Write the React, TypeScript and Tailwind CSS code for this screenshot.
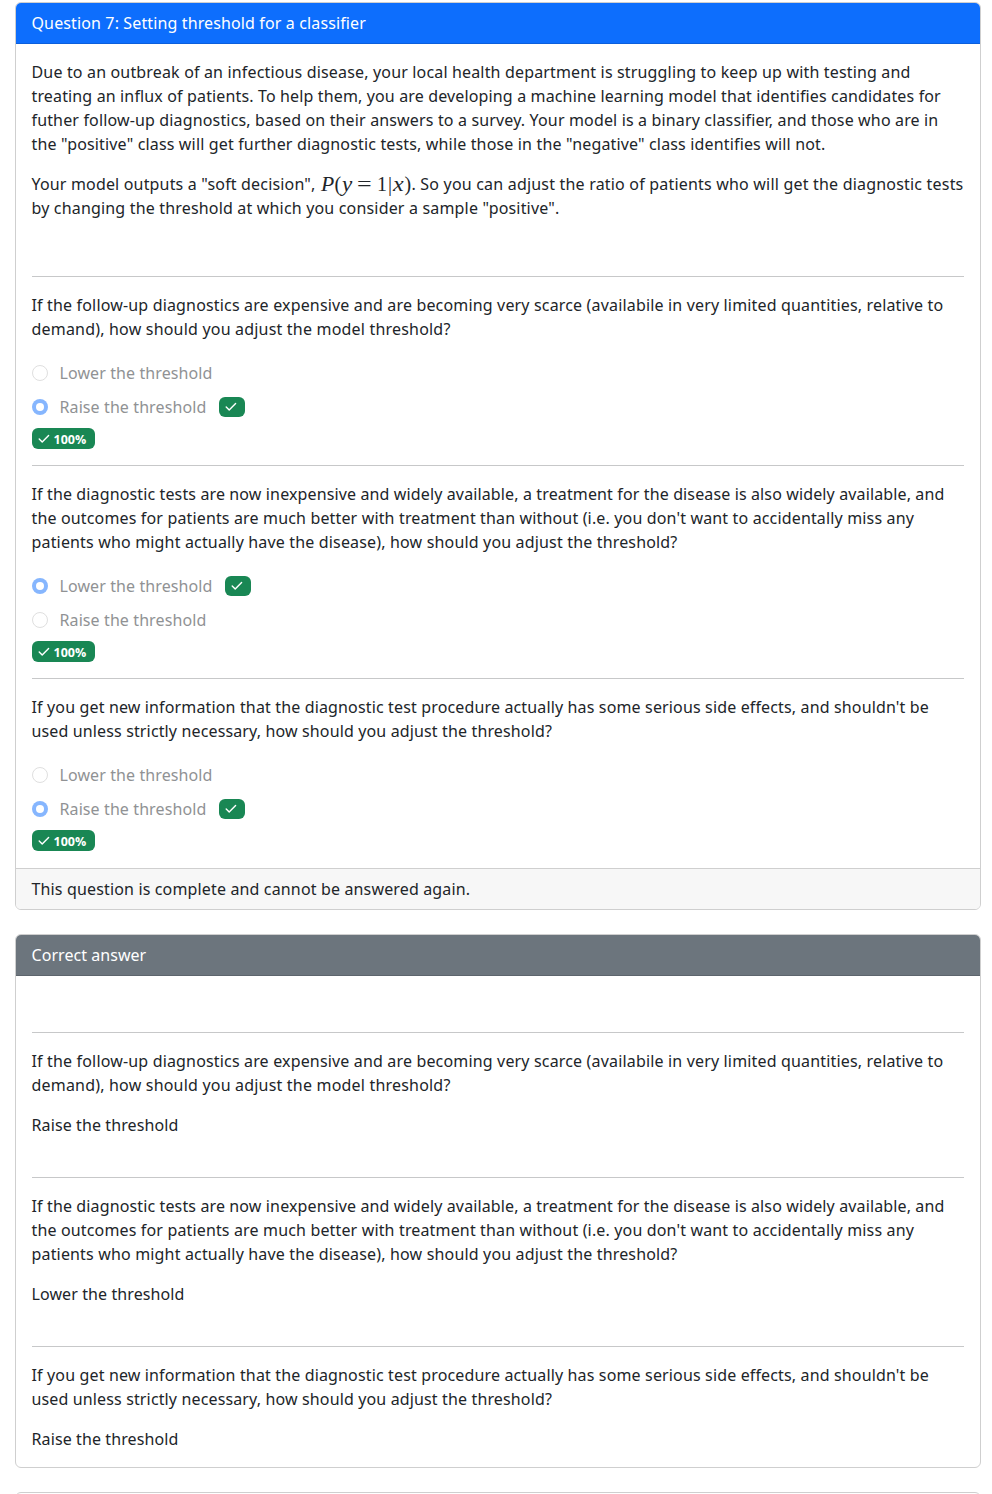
import type { ReactNode } from 'react';

function Line({ ls, children }: { ls: string; children: ReactNode }) {
  return <span className={`-ml-[0.5px] block whitespace-nowrap ${ls}`}>{children}</span>;
}

function Probability() {
  return (
    <span className="flex h-6 w-[91px] font-['Liberation_Serif',serif] text-[20px] leading-6 tracking-normal">
      <span className="inline-block w-[14px] origin-left scale-x-[1.08] italic">P</span>
      <span className="w-[7px]">(</span>
      <span className="inline-block w-[15.5px] origin-left scale-x-[1.15] italic">y</span>
      <span className="inline-block w-[20px] origin-left scale-x-[1.3]">=</span>
      <span className="w-[11px]">1</span>
      <span className="w-[4.5px]">|</span>
      <span className="inline-block w-[12px] origin-left scale-x-[1.2] italic">x</span>
      <span className="w-[7px]">)</span>
    </span>
  );
}

function Check() {
  return (
    <svg viewBox="0 0 12 10" className="h-[10px] w-[12px]" fill="none" stroke="white" strokeWidth="1.4" strokeLinecap="round" strokeLinejoin="round">
      <path d="M1.2 5 4.2 8 10.6 1.5" />
    </svg>
  );
}

function Option({ label, checked }: { label: string; checked?: boolean }) {
  const width = label.startsWith('Lower') ? 'w-[153.5px]' : 'w-[147.5px]';
  return (
    <div className="flex h-6 items-center">
      <span
        className={
          checked
            ? 'flex size-4 items-center justify-center rounded-full bg-[#86b6fe]'
            : 'size-4 rounded-full border border-[#dfdfdf] bg-white'
        }
      >
        {checked && <span className="size-[7.6px] rounded-full bg-white" />}
      </span>
      <span className={`ml-[11.5px] whitespace-nowrap tracking-[0.1px] text-[#909294] ${width}`}>{label}</span>
      {checked && (
        <span className="ml-3 flex h-5 w-[26px] items-center rounded-md bg-[#198754] pl-[6px]">
          <Check />
        </span>
      )}
    </div>
  );
}

function Answers({ correct }: { correct: 'lower' | 'raise' }) {
  return (
    <div className="mt-5">
      <div className="flex flex-col gap-[10px]">
        <Option label="Lower the threshold" checked={correct === 'lower'} />
        <Option label="Raise the threshold" checked={correct === 'raise'} />
      </div>
      <div className="mt-[9px] flex h-[21px] w-[63px] items-center rounded-md bg-[#198754] pl-[6px] text-[12.5px] font-bold leading-[21px] text-white">
        <Check />
        <span className="ml-[3.5px] mt-px font-['Open_Sans','Noto_Sans',sans-serif]">100%</span>
      </div>
    </div>
  );
}

function Rule() {
  return <hr className="my-4 h-px border-0 bg-[#c7c8c9]" />;
}

function ScarceQuestion() {
  return (
    <p>
      <Line ls="tracking-[0.164px]">If the follow-up diagnostics are expensive and are becoming very scarce (availabile in very limited quantities, relative to</Line>
      <Line ls="tracking-[0.195px]">demand), how should you adjust the model threshold?</Line>
    </p>
  );
}

function AvailableQuestion() {
  return (
    <p>
      <Line ls="tracking-[0.13px]">If the diagnostic tests are now inexpensive and widely available, a treatment for the disease is also widely available, and</Line>
      <Line ls="tracking-[0.152px]">the outcomes for patients are much better with treatment than without (i.e. you don't want to accidentally miss any</Line>
      <Line ls="tracking-[0.165px]">patients who might actually have the disease), how should you adjust the threshold?</Line>
    </p>
  );
}

function SideEffectsQuestion() {
  return (
    <p>
      <Line ls="tracking-[0.147px]">If you get new information that the diagnostic test procedure actually has some serious side effects, and shouldn't be</Line>
      <Line ls="tracking-[0.138px]">used unless strictly necessary, how should you adjust the threshold?</Line>
    </p>
  );
}

export default function App() {
  return (
    <div className="flex h-[1494px] w-[992px] flex-col gap-6 overflow-hidden bg-white pl-[15px] pr-[11px] pt-[2px] font-['Noto_Sans','Open_Sans',sans-serif] text-base leading-6 text-[#212529]">
      <section className="shrink-0 overflow-hidden rounded-md border border-[#cfcfcf]">
        <header className="h-[41px] border-b border-[#0b5fdc] bg-[#0d6efd] px-4 py-2 text-white">
          <Line ls="tracking-[0.128px]">Question 7: Setting threshold for a classifier</Line>
        </header>
        <div className="p-4 pb-[17px]">
          <p>
            <Line ls="tracking-[0.161px]">Due to an outbreak of an infectious disease, your local health department is struggling to keep up with testing and</Line>
            <Line ls="tracking-[0.143px]">treating an influx of patients. To help them, you are developing a machine learning model that identifies candidates for</Line>
            <Line ls="tracking-[0.152px]">futher follow-up diagnostics, based on their answers to a survey. Your model is a binary classifier, and those who are in</Line>
            <Line ls="tracking-[0.157px]">the "positive" class will get further diagnostic tests, while those in the "negative" class identifies will not.</Line>
          </p>
          <div className="mt-4 mb-14">
            <div className="-ml-[0.5px] flex h-6">
              <span className="w-[289px] whitespace-nowrap tracking-[0.169px]">Your model outputs a "soft decision",</span>
              <Probability />
              <span className="whitespace-nowrap tracking-[0.196px]">. So you can adjust the ratio of patients who will get the diagnostic tests</span>
            </div>
            <Line ls="tracking-[0.174px]">by changing the threshold at which you consider a sample "positive".</Line>
          </div>
          <Rule />
          <ScarceQuestion />
          <Answers correct="raise" />
          <Rule />
          <AvailableQuestion />
          <Answers correct="lower" />
          <Rule />
          <SideEffectsQuestion />
          <Answers correct="raise" />
        </div>
        <footer className="h-[41px] border-t border-[#cfcfcf] bg-[#f7f7f7] px-4 py-2">
          <Line ls="tracking-[0.15px]">This question is complete and cannot be answered again.</Line>
        </footer>
      </section>

      <section className="shrink-0 overflow-hidden rounded-md border border-[#cfcfcf]">
        <header className="h-[41px] border-b border-[#5d656d] bg-[#6c757d] px-4 py-2 text-white">
          <Line ls="tracking-[0.05px]">Correct answer</Line>
        </header>
        <div className="p-4 pt-14">
          <hr className="mb-4 h-px border-0 bg-[#c7c8c9]" />
          <ScarceQuestion />
          <p className="mt-4 mb-10"><Line ls="tracking-[0.108px]">Raise the threshold</Line></p>
          <Rule />
          <AvailableQuestion />
          <p className="mt-4 mb-10"><Line ls="tracking-[0.1px]">Lower the threshold</Line></p>
          <Rule />
          <SideEffectsQuestion />
          <p className="mt-4"><Line ls="tracking-[0.108px]">Raise the threshold</Line></p>
        </div>
      </section>

      <section className="h-[60px] shrink-0 rounded-md border border-[#cfcfcf]" />
    </div>
  );
}
